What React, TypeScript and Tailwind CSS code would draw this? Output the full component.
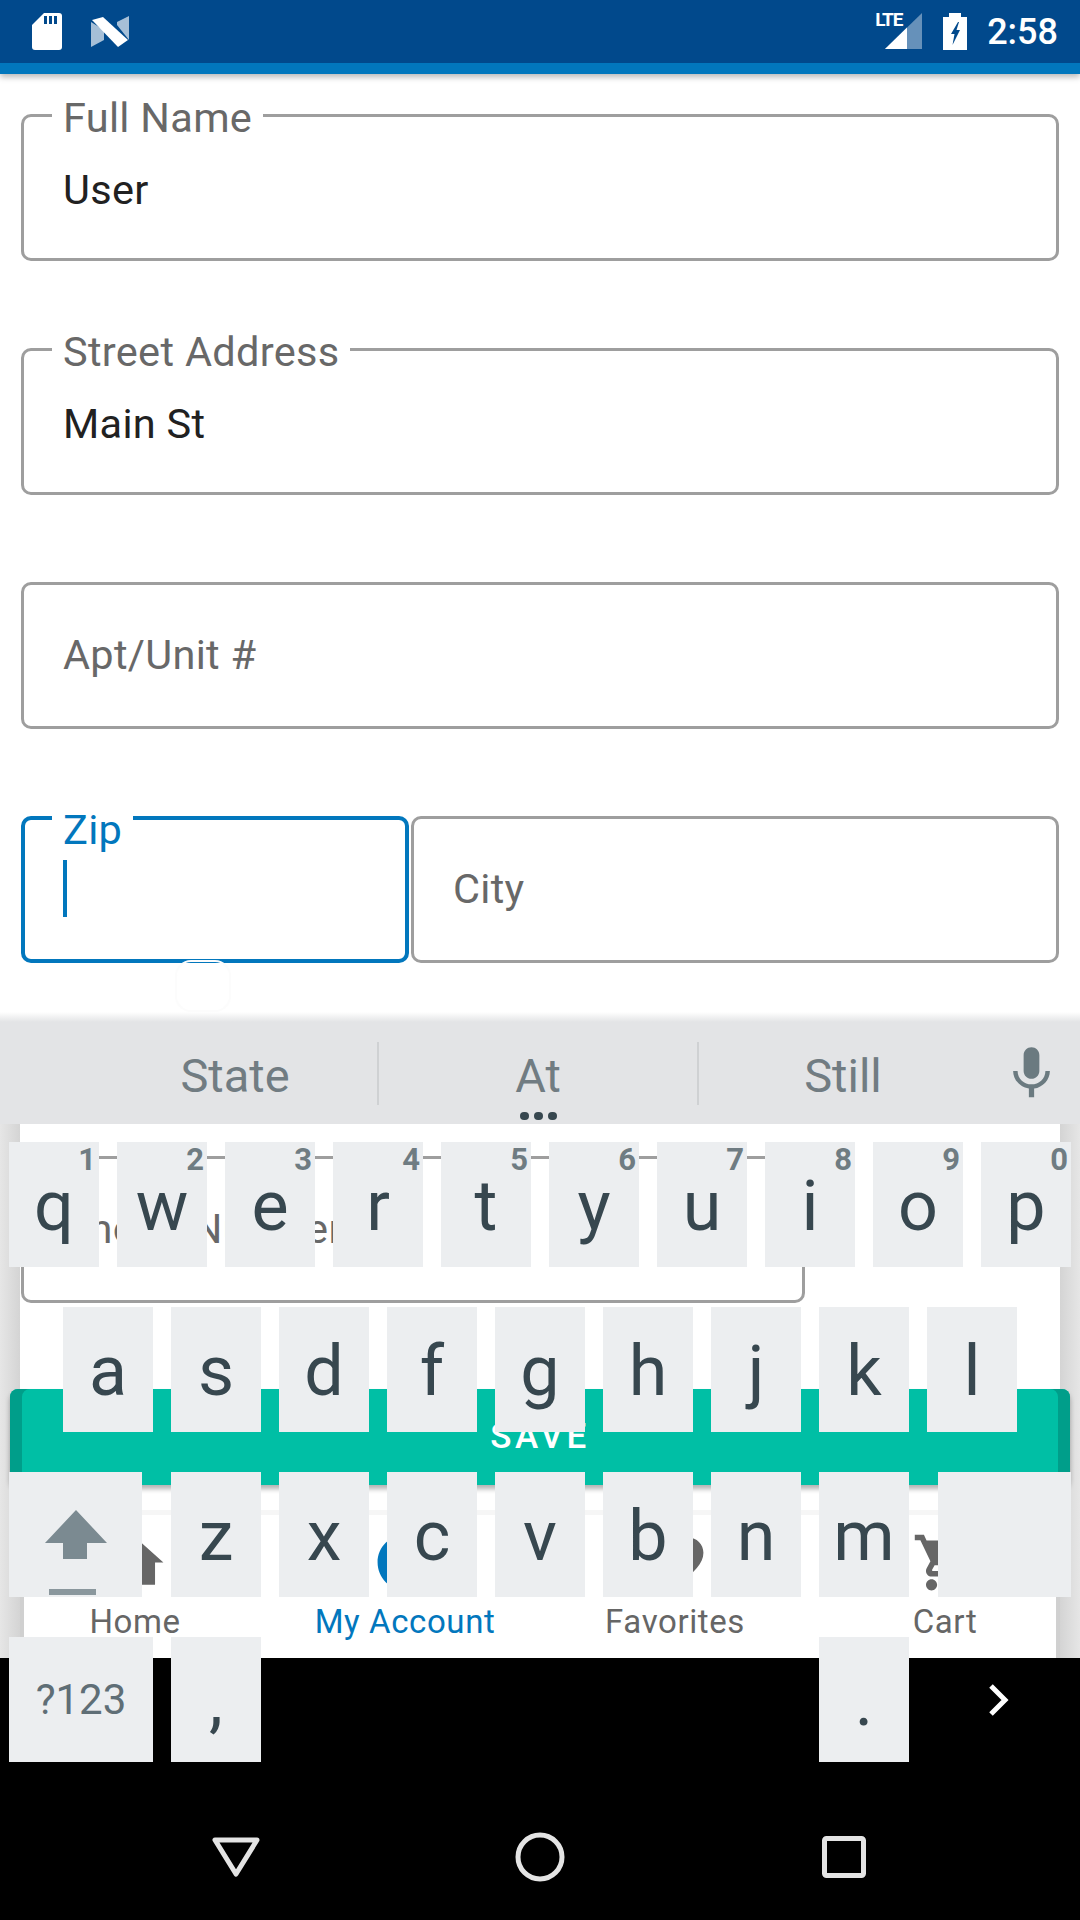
import React from "react";

function Field({ label, value, placeholder, className = "" }: { label?: string; value?: string; placeholder?: string; className?: string }) {
  return (
    <div className={`relative h-[147px] rounded-[10px] border-[3px] border-[#9e9e9e] bg-white ${className}`}>
      {label && (
        <span className="absolute left-[28px] top-[-22px] bg-white px-[11px] text-[41.5px] leading-[46px] tracking-[0.3px] text-[#686868]">{label}</span>
      )}
      {value && <span className="absolute left-[39px] top-[50px] text-[41.5px] leading-[46px] tracking-[0.3px] text-[#212121]">{value}</span>}
      {placeholder && <span className="absolute left-[39px] top-[47px] text-[41.5px] leading-[46px] tracking-[0.3px] text-[#686868]">{placeholder}</span>}
    </div>
  );
}

function Key({ ch, hint, cls = "w-[90px]" }: { ch?: string; hint?: string; cls?: string }) {
  return (
    <div className={`relative flex h-[125px] shrink-0 items-center justify-center bg-[#eceef0] pt-[3px] text-[70px] leading-none text-[#37474f] ${cls}`}>
      {ch}
      {hint && <span className="absolute right-[3px] top-[2px] text-[31px] font-bold leading-[31px] text-[#6f7c82]">{hint}</span>}
    </div>
  );
}

function NavItem({ label, d, active }: { label: string; d: string; active?: boolean }) {
  return (
    <div className={`flex flex-col items-center pt-[14px] ${active ? "text-[#0277bd]" : "text-[#666666]"}`}>
      <svg viewBox="0 0 24 24" className="h-[67px] w-[67px]" fill="currentColor"><path d={d} /></svg>
      <span className="mt-[6px] text-[33px] leading-[40px] tracking-[0.6px]">{label}</span>
    </div>
  );
}

export default function App() {
  const row1 = ["q", "w", "e", "r", "t", "y", "u", "i", "o", "p"];
  const hints = ["1", "2", "3", "4", "5", "6", "7", "8", "9", "0"];
  return (
    <div className="relative flex h-[1920px] w-[1080px] flex-col overflow-hidden bg-white font-['Roboto',sans-serif]">
      {/* Status bar */}
      <div className="relative z-10 shadow-[0_3px_6px_rgba(0,0,0,0.28)]">
        <div className="flex h-[63px] items-center justify-between bg-[#01498c] pl-[32px] pr-[22px] text-white">
          <div className="flex items-center gap-[29px]">
            <svg width="30" height="37" viewBox="0 0 30 37" className="mb-[1px]">
              <path d="M12 0H27a3 3 0 0 1 3 3V34a3 3 0 0 1-3 3H3a3 3 0 0 1-3-3V12Z" fill="#fff" />
              <path d="M12 3h3v8h-3zM17 3h3v8h-3zM22 3h3v8h-3z" fill="#01498c" />
            </svg>
            <svg width="39" height="31" viewBox="0 0 39 31">
              <path d="M0 6L13 14V24L0 31Z" fill="#fff" fillOpacity="0.65" />
              <path d="M38 0V24L26 9V6Z" fill="#fff" fillOpacity="0.65" />
              <path d="M1 4L12 1L37 24L27 31Z" fill="#fff" />
            </svg>
          </div>
          <div className="flex items-center">
            <div className="relative mr-[21px] h-[37px] w-[37px]">
              <svg width="37" height="36" viewBox="0 0 37 36" className="absolute bottom-[1px] left-0">
                <path d="M0 36L37 0V36Z" fill="#fff" fillOpacity="0.4" />
                <path d="M0 36L22 14.6V36Z" fill="#fff" />
              </svg>
              <span className="absolute left-[-10px] top-[-3px] text-[19px] font-bold leading-[20px] tracking-[-1.2px]">LTE</span>
            </div>
            <svg width="24" height="37" viewBox="0 0 24 37" className="mr-[20px]">
              <path d="M6 0H18V4H24V37H0V4H6Z" fill="#fff" />
              <path d="M15 9L8 21H11.5L9.5 32L17 17H13.5L16 9Z" fill="#01498c" />
            </svg>
            <span className="text-[36px] font-medium leading-[40px]">2:58</span>
          </div>
        </div>
        <div className="h-[11px] bg-[#0277bd]" />
      </div>

      {/* Upper form */}
      <div className="flex h-[1050px] flex-col gap-[87px] px-[21px] pt-[40px]">
        <Field label="Full Name" value="User" />
        <Field label="Street Address" value="Main St" />
        <Field placeholder="Apt/Unit #" />
        <div className="flex gap-[2px]">
          <div className="relative h-[147px] w-[388px] rounded-[10px] border-[4px] border-[#0277bd] bg-white">
            <span className="absolute left-[27px] top-[-13px] bg-white px-[11px] text-[41.5px] leading-[46px] tracking-[0.3px] text-[#0277bd]">Zip</span>
            <div className="absolute left-[38px] top-[40px] h-[57px] w-[4px] bg-[#0277bd]" />
          </div>
          <Field placeholder="City" className="flex-1" />
        </div>
      </div>
      {/* faint ghost of the selection handle */}
      <div className="absolute left-[175px] top-[960px] h-[52px] w-[56px] rounded-[16px] border-[2px] border-[#fcfcfc]" />

      {/* Lower page region, mostly under the keyboard */}
      <div className="flex h-[534px]">
        <div className="relative z-[1] w-[20px] shrink-0 bg-gradient-to-r from-[#e6e6e6] to-[#d4d4d4]" />
        <div className="flex min-w-0 flex-1 flex-col">
          <Field placeholder="Phone Number" className="ml-[1px] mt-[32px] w-[784px]" />
          <div className="relative z-[2] -mx-[10px] mt-[86px] flex h-[96px] items-center justify-center rounded-[8px] bg-[#00bfa5] text-[35px] font-medium tracking-[3.5px] text-white shadow-[inset_12px_0_0_#009e8a,inset_-12px_0_0_#009e8a,0_4px_5px_rgba(0,0,0,0.3)]">
            SAVE
          </div>
          <div className="-mx-[20px] mt-[25px] grid h-[148px] grid-cols-4 border-t-[5px] border-[#f6f6f6] bg-white shadow-[inset_24px_0_0_#d0d0d0,inset_-24px_0_0_#d0d0d0]">
            <NavItem label="Home" d="M10 20v-6h4v6h5v-8h3L12 3 2 12h3v8z" />
            <NavItem active label="My Account" d="M12 2C6.48 2 2 6.48 2 12s4.48 10 10 10 10-4.48 10-10S17.52 2 12 2zm0 3c1.66 0 3 1.34 3 3s-1.34 3-3 3-3-1.34-3-3 1.34-3 3-3zm0 14.2c-2.5 0-4.71-1.28-6-3.22.03-1.99 4-3.08 6-3.08 1.99 0 5.97 1.09 6 3.08-1.29 1.94-3.5 3.22-6 3.22z" />
            <NavItem label="Favorites" d="M12 21.35l-1.45-1.32C5.4 15.36 2 12.28 2 8.5 2 5.42 4.42 3 7.5 3c1.74 0 3.41.81 4.5 2.09C13.09 3.81 14.76 3 16.5 3 19.58 3 22 5.42 22 8.5c0 3.78-3.4 6.86-8.55 11.54L12 21.35z" />
            <NavItem label="Cart" d="M7 18c-1.1 0-1.99.9-1.99 2S5.9 22 7 22s2-.9 2-2-.9-2-2-2zM1 2v2h2l3.6 7.59-1.35 2.45c-.16.28-.25.61-.25.96 0 1.1.9 2 2 2h12v-2H7.42c-.14 0-.25-.11-.25-.25l.03-.12.9-1.63h7.45c.75 0 1.41-.41 1.75-1.03l3.58-6.47c.08-.12.12-.27.12-.41 0-.55-.45-1-1-1H5.21l-.94-2H1zm16 16c-1.1 0-1.99.9-1.99 2s.89 2 1.99 2 2-.9 2-2-.9-2-2-2z" />
          </div>
        </div>
        <div className="relative z-[1] w-[20px] shrink-0 bg-gradient-to-l from-[#e6e6e6] to-[#d4d4d4]" />
      </div>

      {/* System navigation */}
      <div className="relative z-[1] flex h-[262px] gap-[244px] bg-black pl-[206px] pt-[169px]">
        <svg width="60" height="60" viewBox="0 0 60 60" fill="none" stroke="#e4e4e4" strokeWidth="5" strokeLinejoin="round"><path d="M9 13H51L30 47Z" /></svg>
        <svg width="60" height="60" viewBox="0 0 60 60" fill="none" stroke="#e4e4e4" strokeWidth="5"><circle cx="30" cy="30" r="22" /></svg>
        <svg width="60" height="60" viewBox="0 0 60 60" fill="none" stroke="#e4e4e4" strokeWidth="5"><rect x="10.5" y="11.5" width="39" height="37" rx="2" /></svg>
      </div>

      {/* Keyboard overlay */}
      <div className="absolute left-0 top-[1012px] z-20 w-[1080px]">
        <div className="h-[10px] bg-gradient-to-b from-transparent to-[#e3e4e6]" />
        <div className="relative flex h-[102px] items-center bg-[#e3e4e6] pl-[93px] text-[47px] leading-none text-[#717c82]">
          <div className="flex h-[63px] w-[286px] items-center justify-center border-r-[2px] border-[#cfd1d3] pt-[4px]">State</div>
          <div className="flex h-[63px] w-[320px] items-center justify-center border-r-[2px] border-[#cfd1d3] pt-[4px]">At</div>
          <div className="flex h-[63px] w-[288px] items-center justify-center pt-[4px]">Still</div>
          <svg viewBox="0 0 24 24" className="ml-[13px] h-[63px] w-[63px]" fill="#6b7a80">
            <path d="M12 14c1.66 0 2.99-1.34 2.99-3L15 5c0-1.66-1.34-3-3-3S9 3.34 9 5v6c0 1.66 1.34 3 3 3zm5.3-3c0 3-2.54 5.1-5.3 5.1S6.7 14 6.7 11H5c0 3.41 2.72 6.23 6 6.72V21h2v-3.28c3.28-.48 6-3.3 6-6.72h-1.7z" />
          </svg>
          <div className="absolute bottom-[4px] left-[520px] flex gap-[5px]">
            <span className="h-[8px] w-[9px] rounded-full bg-[#37474f]" />
            <span className="h-[8px] w-[9px] rounded-full bg-[#37474f]" />
            <span className="h-[8px] w-[9px] rounded-full bg-[#37474f]" />
          </div>
        </div>
        <div className="flex flex-col gap-[40px] pt-[18px]">
          <div className="flex gap-[18px] pl-[9px]">
            {row1.map((c, i) => <Key key={c} ch={c} hint={hints[i]} />)}
          </div>
          <div className="flex gap-[18px] pl-[63px]">
            {["a", "s", "d", "f", "g", "h", "j", "k", "l"].map((c) => <Key key={c} ch={c} />)}
          </div>
          <div className="flex pl-[9px]">
            <div className="mr-[29px] h-[125px] w-[133px] shrink-0 bg-[#eceef0]">
              <svg width="133" height="125" viewBox="0 0 133 125">
                <path d="M67 38L98 71H78V87H54V71H36Z" fill="#7b8a91" />
                <rect x="40" y="117" width="47" height="6" fill="#8a979d" />
              </svg>
            </div>
            <div className="flex gap-[18px]">
              {["z", "x", "c", "v", "b", "n", "m"].map((c) => <Key key={c} ch={c} />)}
            </div>
            <div className="ml-[29px]"><Key cls="w-[133px]" /></div>
          </div>
          <div className="flex items-start pl-[9px]">
            <div className="flex h-[125px] w-[144px] shrink-0 items-center justify-center bg-[#eceef0] text-[42px] leading-none text-[#5f6e76]">?123</div>
            <div className="ml-[18px]"><Key ch="," /></div>
            <div className="ml-[558px]"><Key ch="." /></div>
            <svg width="24" height="36" viewBox="0 0 24 36" fill="none" stroke="#fff" strokeWidth="5" className="ml-[78px] mt-[45px]">
              <path d="M4 4L18 18L4 32" />
            </svg>
          </div>
        </div>
      </div>
    </div>
  );
}
